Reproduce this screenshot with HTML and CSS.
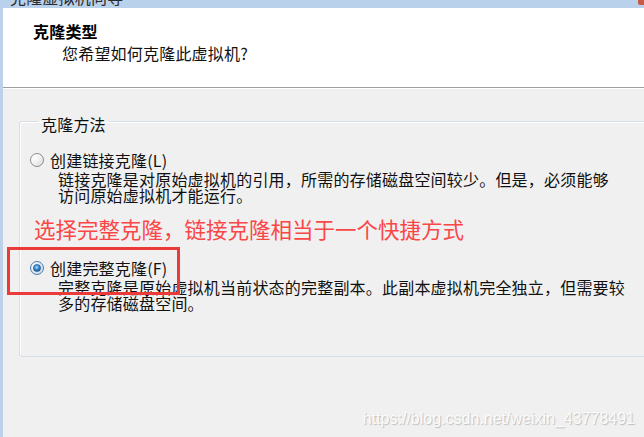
FILE: index.html
```html
<!DOCTYPE html>
<html>
<head>
	<meta charset='utf-8'>
	<title>克隆虚拟机向导</title>
	<link rel="stylesheet" href="styles.css">
</head>

<body>
	<div id="window">
		<div class="titlebar">
			<span class="caption">克隆虚拟机向导</span>
			<i class="close"></i>
		</div>
		<div class="frame">
			<div class="header">
				<div class="header-title">克隆类型</div>
				<div class="header-sub">您希望如何克隆此虚拟机?</div>
			</div>
			<div class="content">
				<fieldset class="group">
					<legend>克隆方法</legend>
					<div class="option">
						<svg class="radio" width="14" height="14" viewBox="0 0 14 14">
							<defs>
								<radialGradient id="off" cx="0.35" cy="0.35" r="0.7">
									<stop offset="0" stop-color="#ffffff"/>
									<stop offset="0.6" stop-color="#ececec"/>
									<stop offset="1" stop-color="#c9c9c9"/>
								</radialGradient>
							</defs>
							<circle cx="7" cy="7" r="6.5" fill="url(#off)" stroke="#8f8f8f"/>
							<circle cx="7" cy="7" r="5" fill="none" stroke="#ffffff" stroke-opacity=".7"/>
						</svg>
						<span>创建链接克隆(L)</span>
					</div>
					<div class="desc">链接克隆是对原始虚拟机的引用，所需的存储磁盘空间较少。但是，必须能够<br>访问原始虚拟机才能运行。</div>
					<div class="note">选择完整克隆，链接克隆相当于一个快捷方式</div>
					<div class="option">
						<svg class="radio" width="14" height="14" viewBox="0 0 14 14">
							<defs>
								<radialGradient id="ring" cx="0.35" cy="0.35" r="0.7">
									<stop offset="0" stop-color="#ffffff"/>
									<stop offset="1" stop-color="#cfdbe6"/>
								</radialGradient>
								<radialGradient id="dot" cx="0.45" cy="0.4" r="0.6">
									<stop offset="0" stop-color="#a8dcff"/>
									<stop offset="0.5" stop-color="#3c8fd6"/>
									<stop offset="1" stop-color="#17508a"/>
								</radialGradient>
							</defs>
							<circle cx="7" cy="7" r="6.5" fill="url(#ring)" stroke="#4a7fae"/>
							<circle cx="7" cy="7" r="3.6" fill="url(#dot)" stroke="#1d5587" stroke-width=".6"/>
						</svg>
						<span>创建完整克隆(F)</span>
					</div>
					<div class="desc">完整克隆是原始虚拟机当前状态的完整副本。此副本虚拟机完全独立，但需要较<br>多的存储磁盘空间。</div>
				</fieldset>
			</div>
		</div>
		<!-- 标注框 -->
		<div class="mark"></div>
		<div class="watermark">https://blog.csdn.net/weixin_43778491</div>
	</div>
</body>
</html>
```

FILE: styles.css
```css
html, body {margin:0; padding:0;}
body {
	width: 644px;
	height: 437px;
	overflow: hidden;
	background: #f0f0f0;
	font-family: "Noto Sans CJK SC", "Liberation Sans", sans-serif;
	font-size: 16px;
	line-height: 16px;
	letter-spacing: 0.2px;
	color: #111;
}
div#window{
	position: relative;
	height: 437px;
	overflow: hidden;
}
div.titlebar{
	height: 8px;
	background: #b9d1ea;
	overflow: hidden;
	display: flex;
	justify-content: space-between;
}
span.caption{
	margin: -11px 0 0 10px;
	color: #2a2a2a;
}
i.close{
	width: 6px;
	height: 5px;
	background: #c65a47;
	border-radius: 0 0 0 2px;
}
div.frame{
	border-left: 3px solid #bdd2ea;
	height: 429px;
}
div.header{
	box-sizing: border-box;
	height: 80px;
	background: #fff;
	border-bottom: 1px solid #a0a0a0;
	box-shadow: 0 1px #fff;
	padding: 15px 0 0 30px;
}
div.header-title{
	font-weight: bold;
	color: #000;
}
div.header-sub{
	margin: 6px 0 0 29px;
}
div.content{
	padding: 22px 0 0 16px;
}
fieldset.group{
	width: 700px;
	margin: 0;
	padding: 20px 10px 45px;
	border: 1px solid #d5dfe5;
	border-radius: 3px;
	box-shadow: inset 1px 1px #fff;
}
fieldset.group>legend{
	margin-left: 8px;
	padding: 6px 3px 0;
}
div.option{
	display: flex;
	align-items: center;
	gap: 6px;
	height: 16px;
}
svg.radio{
	display: block;
	flex: none;
}
div.desc{
	margin: 3px 0 0 28px;
}
div.note{
	margin: 14px 0 0 4px;
	font-size: 21.5px;
	line-height: 24px;
	letter-spacing: 0;
	color: #fa4646;
}
div.note+div.option{
	margin-top: 19px;
}
div.mark{
	position: absolute;
	left: 7px;
	top: 247px;
	width: 167px;
	height: 42px;
	border: 3px solid #ea3a3a;
}
div.watermark{
	position: absolute;
	right: 9px;
	bottom: 10px;
	font-family: "Liberation Sans", Arial, sans-serif;
	font-size: 16px;
	line-height: 17px;
	letter-spacing: 0;
	color: #fbfbfb;
	text-shadow: 1px 1px 1px #bcbcbc;
}
```
